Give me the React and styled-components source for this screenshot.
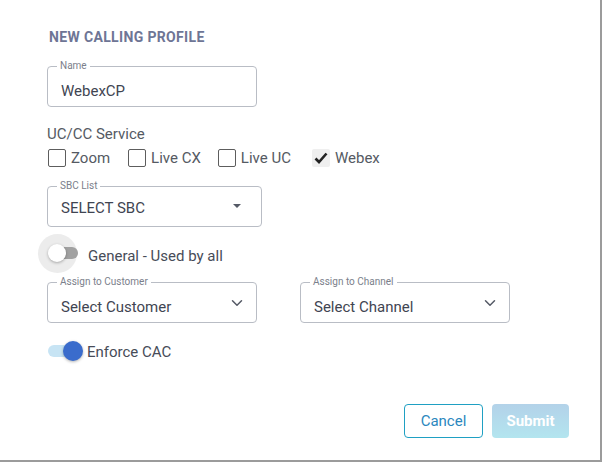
import React from "react";
import styled, { createGlobalStyle } from "styled-components";
import { ChevronDown } from "lucide-react";

const Global = createGlobalStyle`
  html, body { margin: 0; padding: 0; background: #fff; }
  body { font-family: Roboto, "Liberation Sans", sans-serif; }
  * { box-sizing: border-box; }
`;

const Panel = styled.div`
  width: 602px;
  height: 462px;
  border-right: 2px solid #9b9b9b;
  border-bottom: 2px solid #9b9b9b;
  padding: 29px 31px 0 47px;
  display: flex;
  flex-direction: column;
  color: #474c58;
`;

const Title = styled.h2`
  margin: 0 0 0 2px;
  font-size: 14px;
  line-height: 16px;
  font-weight: 700;
  letter-spacing: 0.35px;
  color: #6e7595;
`;

const Field = styled.div`
  position: relative;
  margin-top: ${(p) => p.$top || 0}px;
  width: ${(p) => p.$w}px;
  height: 41px;
  padding: 2px ${(p) => p.$pr || 12}px 0 13px;
  border: 1px solid #b9bdc5;
  border-radius: 4px;
  display: flex;
  align-items: center;
  justify-content: space-between;
`;

const Label = styled.span`
  position: absolute;
  left: 9px;
  top: -7px;
  padding: 0 3px;
  background: #fff;
  font-size: 10px;
  line-height: 12px;
  color: #7b808b;
`;

const Value = styled.span`
  margin-top: ${(p) => p.$dy ?? 6}px;
  font-size: 15px;
  color: #3f4552;
`;

const Caret = styled.span`
  width: 0;
  height: 0;
  border-left: 4px solid transparent;
  border-right: 4px solid transparent;
  border-top: 4px solid #555a66;
  margin-top: -4px;
`;

const Chevron = styled(ChevronDown)`
  margin-top: -2px;
  color: #555a66;
`;

const Section = styled.div`
  margin-top: 18px;
  font-size: 15px;
  line-height: 18px;
  color: #555a63;
`;

const CheckRow = styled.div`
  margin-top: 6px;
  display: flex;
  align-items: center;
  height: 18px;
`;

const CheckItem = styled.label`
  display: flex;
  align-items: center;
  margin-right: ${(p) => p.$gap}px;
  font-size: 15px;
  color: #555a63;
`;

const Box = styled.span`
  width: 18px;
  height: 18px;
  margin: 0 5px 0 1px;
  border: 1.5px solid #5d5d5d;
  border-radius: 2px;
  background: #fff;
  display: flex;
  align-items: center;
  justify-content: center;
  ${(p) => p.$checked && "border-color: transparent; background: #efefef;"}
`;

const ToggleRow = styled.div`
  margin-top: ${(p) => p.$top}px;
  height: ${(p) => p.$h}px;
  display: flex;
  align-items: center;
  font-size: 15px;
  color: #474c58;
`;

const ToggleText = styled.span`
  margin-top: ${(p) => p.$dy}px;
`;

const Switch = styled.span`
  position: relative;
  width: 29px;
  height: 12px;
  margin: 0 10px 0 ${(p) => (p.$on ? 1 : 2)}px;
`;

const Track = styled.span`
  position: absolute;
  inset: 0;
  border-radius: 6px;
  background: ${(p) => (p.$on ? "#c7e4f4" : "#a1a1a1")};
`;

const Halo = styled.span`
  position: absolute;
  left: -11px;
  top: -13px;
  width: 39px;
  height: 39px;
  border-radius: 50%;
  background: #ececec;
`;

const Thumb = styled.span`
  position: absolute;
  top: 50%;
  left: ${(p) => (p.$on ? 15 : -1)}px;
  width: ${(p) => (p.$on ? 20 : 18)}px;
  height: ${(p) => (p.$on ? 20 : 18)}px;
  margin-top: ${(p) => (p.$on ? -10 : -9)}px;
  border-radius: 50%;
  background: ${(p) => (p.$on ? "#3a6ccc" : "#fff")};
  box-shadow: 0 1px 3px rgba(0, 0, 0, 0.3);
`;

const Pair = styled.div`
  display: flex;
  gap: 43px;
  margin-top: 10px;
`;

const Actions = styled.div`
  margin-top: 42px;
  display: flex;
  justify-content: flex-end;
  gap: 9px;
`;

const Button = styled.button`
  width: ${(p) => p.$w}px;
  height: 34px;
  border-radius: 4px;
  font-family: inherit;
  font-size: 15px;
  ${(p) =>
    p.$primary
      ? `border: none; color: #fff; font-weight: 700;
         background: linear-gradient(180deg, #b3d2e9, #b3e5ef);`
      : `border: 1.5px solid #1fa0c3; color: #2b87be; background: #fff;`}
`;

const Check = () => (
  <svg width="14" height="12" viewBox="0 0 14 12">
    <path d="M1.5 6.5 L5 10 L12.5 1.5" fill="none" stroke="#222" strokeWidth="2.6" />
  </svg>
);

const options = [
  { label: "Zoom", gap: 17 },
  { label: "Live CX", gap: 16 },
  { label: "Live UC", gap: 20 },
  { label: "Webex", checked: true, gap: 0 },
];

export default function App() {
  return (
    <>
      <Global />
      <Panel>
        <Title>NEW CALLING PROFILE</Title>
        <Field $w={210} $top={21}>
          <Label>Name</Label>
          <Value $dy={7}>WebexCP</Value>
        </Field>
        <Section>UC/CC Service</Section>
        <CheckRow>
          {options.map((o) => (
            <CheckItem key={o.label} $gap={o.gap}>
              <Box $checked={o.checked}>{o.checked && <Check />}</Box>
              {o.label}
            </CheckItem>
          ))}
        </CheckRow>
        <Field $w={215} $top={19} $pr={20}>
          <Label>SBC List</Label>
          <Value $dy={0}>SELECT SBC</Value>
          <Caret />
        </Field>
        <ToggleRow $top={7} $h={38}>
          <Switch>
            <Halo />
            <Track />
            <Thumb />
          </Switch>
          <ToggleText $dy={5}>General - Used by all</ToggleText>
        </ToggleRow>
        <Pair>
          <Field $w={210} $pr={10}>
            <Label>Assign to Customer</Label>
            <Value>Select Customer</Value>
            <Chevron size={18} strokeWidth={2} />
          </Field>
          <Field $w={210} $pr={10}>
            <Label>Assign to Channel</Label>
            <Value>Select Channel</Value>
            <Chevron size={18} strokeWidth={2} />
          </Field>
        </Pair>
        <ToggleRow $top={17} $h={22}>
          <Switch $on>
            <Track $on />
            <Thumb $on />
          </Switch>
          <ToggleText $dy={2}>Enforce CAC</ToggleText>
        </ToggleRow>
        <Actions>
          <Button $w={79}>Cancel</Button>
          <Button $w={77} $primary>Submit</Button>
        </Actions>
      </Panel>
    </>
  );
}
